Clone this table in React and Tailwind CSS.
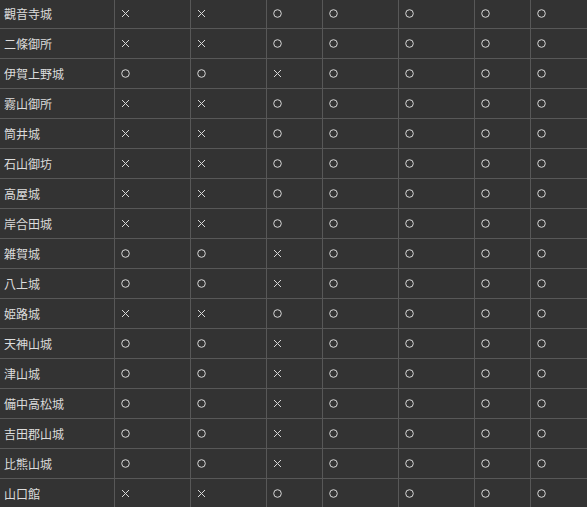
const ROWS = [
  ["觀音寺城", "××○○○○○"],
  ["二條御所", "××○○○○○"],
  ["伊賀上野城", "○○×○○○○"],
  ["霧山御所", "××○○○○○"],
  ["筒井城", "××○○○○○"],
  ["石山御坊", "××○○○○○"],
  ["高屋城", "××○○○○○"],
  ["岸合田城", "××○○○○○"],
  ["雑賀城", "○○×○○○○"],
  ["八上城", "○○×○○○○"],
  ["姫路城", "××○○○○○"],
  ["天神山城", "○○×○○○○"],
  ["津山城", "○○×○○○○"],
  ["備中高松城", "○○×○○○○"],
  ["吉田郡山城", "○○×○○○○"],
  ["比熊山城", "○○×○○○○"],
  ["山口館", "××○○○○○"],
];

function Mark({ v }) {
  if (v === "×") {
    return (
      <svg width="9" height="9" viewBox="0 0 9 9" className="text-[#d8d8d8]">
        <path d="M1 1L8 8M8 1L1 8" stroke="currentColor" strokeWidth="1" />
      </svg>
    );
  }
  return (
    <svg width="9" height="9" viewBox="0 0 9 9" className="text-[#d8d8d8]">
      <circle cx="4.5" cy="4.5" r="3.8" fill="none" stroke="currentColor" strokeWidth="1" />
    </svg>
  );
}

export default function App() {
  return (
    <div
      className="w-[587px] h-[507px] overflow-hidden bg-[#333333]"
      style={{ fontFamily: '"Noto Sans CJK JP", "Noto Sans", sans-serif' }}
    >
      <div className="-mt-px">
        {ROWS.map(([name, marks]) => (
          <div
            key={name}
            className="grid grid-cols-[115px_76px_76px_56px_76px_76px_56px_56px] h-[30px] border-b border-[#585858]"
          >
            <div className="flex items-center pl-[4px] text-[12px] text-[#dcdcdc] border-r border-[#585858]">
              {name}
            </div>
            {[...marks].map((m, i) => (
              <div
                key={i}
                className={`flex items-center pl-[6px] ${i < 6 ? "border-r border-[#585858]" : ""}`}
              >
                <Mark v={m} />
              </div>
            ))}
          </div>
        ))}
      </div>
    </div>
  );
}
